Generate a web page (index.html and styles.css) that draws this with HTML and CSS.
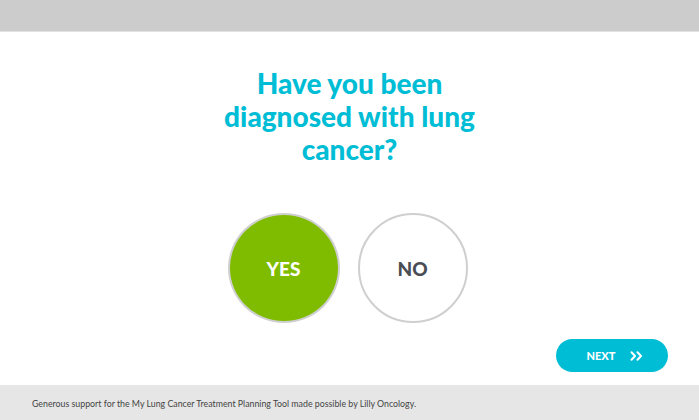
FILE: index.html
```html
<!DOCTYPE html>
<html lang="en">
<head>
<meta charset="utf-8"/>
<title>My Lung Cancer Treatment Planning Tool</title>
<link rel="stylesheet" href="styles.css">
</head>
<body>
<div class="page">
  <div class="top-bar"></div>
  <main class="question">
    <h1 class="question-title">Have you been<br>diagnosed with lung<br>cancer?</h1>
    <div class="answers">
      <button class="answer answer-yes">YES</button>
      <button class="answer answer-no">NO</button>
    </div>
    <div class="actions">
      <button class="next-btn">NEXT
        <svg width="13" height="10" viewBox="0 0 13 10" fill="none" stroke="#fff" stroke-width="2" stroke-linecap="round" stroke-linejoin="round">
          <path d="M1.5 1.2 L5 5 L1.5 8.8"/>
          <path d="M7.5 1.2 L11 5 L7.5 8.8"/>
        </svg>
      </button>
    </div>
  </main>
  <footer class="footer">
    Generous support for the My Lung Cancer Treatment Planning Tool made possible by Lilly Oncology.
  </footer>
</div>
</body>
</html>
```

FILE: styles.css
```css
* {
  box-sizing: border-box;
}
body {
  margin: 0;
  font-family: Lato, "Open Sans", sans-serif;
  background: #fff;
}
.page {
  display: flex;
  flex-direction: column;
  height: 420px;
}
.top-bar {
  height: 32px;
  background: #cccccc;
  border-bottom: 1px solid #e2e2e2;
}
.question {
  flex: 1;
  display: flex;
  flex-direction: column;
  align-items: center;
}
.question-title {
  margin: 35px 0 0;
  font-size: 28px;
  line-height: 33px;
  font-weight: 900;
  color: #00bdd6;
  text-align: center;
}
.answers {
  display: flex;
  gap: 18px;
  margin-top: 47px;
  margin-right: 4px;
}
.answer {
  width: 112px;
  height: 110px;
  border-radius: 50%;
  border: 2px solid #cfcfcf;
  font-family: Lato, sans-serif;
  font-weight: 900;
  font-size: 19px;
  cursor: pointer;
  padding: 0;
}
.answer-yes {
  background: #7fbc00;
  color: #fff;
}
.answer-no {
  width: 110px;
  background: #fff;
  color: #4a4e54;
}
.actions {
  align-self: stretch;
  display: flex;
  justify-content: flex-end;
  padding-right: 31px;
  margin-top: 16px;
}
.next-btn {
  display: flex;
  align-items: center;
  justify-content: center;
  gap: 15px;
  width: 112px;
  height: 33px;
  border: none;
  border-radius: 17px;
  background: #00bdd6;
  color: #fff;
  font-family: Lato, sans-serif;
  font-weight: 900;
  font-size: 11px;
  cursor: pointer;
  padding: 0 0 0 6px;
}
.footer {
  height: 35px;
  background: #e6e6e6;
  color: #444;
  font-size: 8.8px;
  padding: 13px 0 0 32px;
}
```
